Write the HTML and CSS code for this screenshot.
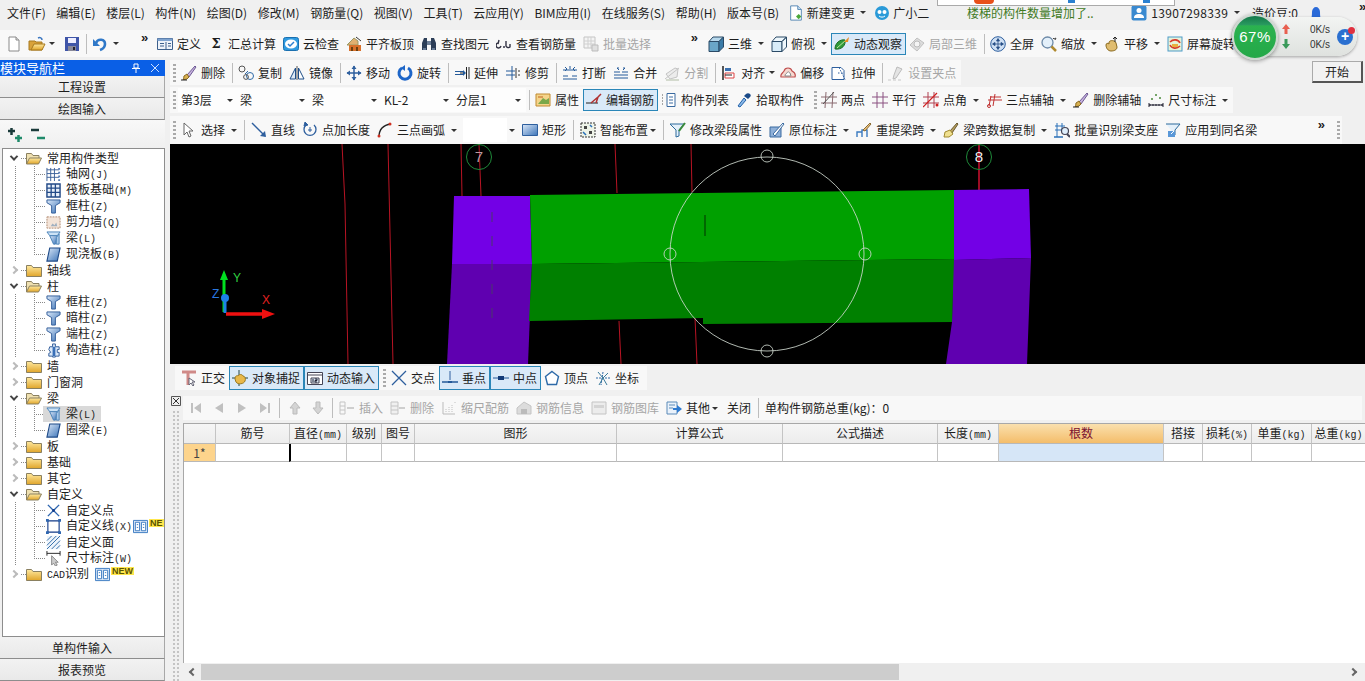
FILE: index.html
```html
<!DOCTYPE html>
<html lang="zh-CN">
<head>
<meta charset="utf-8">
<title>钢筋算量</title>
<link rel="stylesheet" href="styles.css">
</head>
<body>
<svg class="defs" width="0" height="0" aria-hidden="true">
<defs>
<linearGradient id="fy" x1="0" y1="0" x2="0" y2="1"><stop offset="0" stop-color="#ffe9a0"/><stop offset="1" stop-color="#e0a52a"/></linearGradient>
<linearGradient id="bl" x1="0" y1="0" x2="1" y2="1"><stop offset="0" stop-color="#dbe8f8"/><stop offset="1" stop-color="#3c74b8"/></linearGradient>
<symbol id="new" viewBox="0 0 16 16"><path d="M3 1h7l3 3v11H3z" fill="#fff" stroke="#8a8a8a"/><path d="M10 1v3h3" fill="#ddd" stroke="#8a8a8a"/></symbol>
<symbol id="open" viewBox="0 0 18 16"><path d="M1 5h6l1 1h6v8H1z" fill="#d9a23a" stroke="#a87a20"/><path d="M3 14l3-6h11l-3 6z" fill="url(#fy)" stroke="#a87a20"/><path d="M10 2c2-1 4 0 4 2" fill="none" stroke="#3a76c0" stroke-width="1.5"/></symbol>
<symbol id="save" viewBox="0 0 16 16"><path d="M1 1h14v14H1z" fill="#3f55a8"/><path d="M4 2h8v5H4z" fill="#eef"/><path d="M4 10h8v5H4z" fill="#889"/><path d="M9 11h2v3H9z" fill="#223"/></symbol>
<symbol id="undo" viewBox="0 0 16 16"><path d="M4 7C6 2 13 3 13 8c0 3-2 5-5 6" fill="none" stroke="#2f78c8" stroke-width="2.6"/><path d="M1 3v7h7z" fill="#2f78c8"/></symbol>
<symbol id="def" viewBox="0 0 16 16"><path d="M.5 2.500h15v11H.5z" fill="#eef3fa" stroke="#3c5f8c"/><path d="M.5 2.500h15V5H.5z" fill="#7fa3cf"/><path d="M9 6v7M3 7.500h4M3 10h4M11 7.500h3M11 10h3" stroke="#3c5f8c" fill="none"/></symbol>
<symbol id="cloud" viewBox="0 0 16 16"><rect x=".5" y="1.500" width="15" height="13" rx="2" fill="#2f9ae0" stroke="#1a70b0"/><ellipse cx="8" cy="8" rx="6" ry="4.500" fill="#fff"/><path d="M5 8l2 2 4-4" fill="none" stroke="#2f80d0" stroke-width="1.500"/></symbol>
<symbol id="flat" viewBox="0 0 16 16"><path d="M1 9l7-7 4 3v4z" fill="#e0b070" stroke="#996"/><path d="M3 9h12v6H3z" fill="#d8702a"/><path d="M5 11h2v4H5zM10 11h2v4h-2z" fill="#6a4010"/><path d="M10 1l5 4" stroke="#333"/></symbol>
<symbol id="bino" viewBox="0 0 16 16"><path d="M1 14V7l2-5h3v12zM15 14V7l-2-5h-3v12z" fill="#2c3e58"/><path d="M6 5h4v4H6z" fill="#6f8199"/><path d="M2 13h3M11 13h3" stroke="#9fb5d0"/></symbol>
<symbol id="glass" viewBox="0 0 16 16"><path d="M2 7a2.500 2.500 0 1 0 3 3M3 4L2 8M10 5v5a2.500 2.500 0 0 0 4 1l0-3M7 11h2" fill="none" stroke="#334" stroke-width="1.400"/></symbol>
<symbol id="batch" viewBox="0 0 16 16"><path d="M1 1h11v11H1z" fill="#f4f4f4" stroke="#c4c4c4"/><path d="M1 5h11M1 8h11M5 1v11M8 1v11" stroke="#d0d0d0"/><path d="M9 9h6v6H9z" fill="#e0e0e0" stroke="#bbb"/></symbol>
<symbol id="cube" viewBox="0 0 16 16"><path d="M1 5.500h10v10H1z" fill="#6aa6c8" stroke="#2b4a66"/><path d="M1 5.500L5 1h10.500L11 5.500z" fill="#b7d8ec" stroke="#2b4a66"/><path d="M11 5.500L15.500 1v10L11 15.500z" fill="#3b7ca8" stroke="#2b4a66"/></symbol>
<symbol id="cubeo" viewBox="0 0 16 16"><path d="M1 5.500h10v10H1z" fill="#d8ecf8" stroke="#2b4a66"/><path d="M1 5.500L5 1h10.500L11 5.500zM11 5.500L15.500 1v10L11 15.500z" fill="#eef7fc" stroke="#2b4a66"/></symbol>
<symbol id="orbit" viewBox="0 0 16 16"><path d="M1 13C1 7 6 3 11 4c1 5-3 10-10 9z" fill="#2f9a3a" stroke="#1b6a24"/><path d="M3 12l9-8" stroke="#bfe6a0"/><path d="M10 6l5-5-1 5z" fill="#e88a20"/></symbol>
<symbol id="part" viewBox="0 0 16 16"><path d="M1 9l7-7 7 5-7 8z" fill="#dcdcdc" stroke="#c0c0c0"/><circle cx="8" cy="8" r="3" fill="#f4f4f4" stroke="#bbb"/></symbol>
<symbol id="full" viewBox="0 0 16 16"><circle cx="8" cy="8" r="7.300" fill="#cfe0f4" stroke="#2e5f9e"/><path d="M8 3v10M3 8h10M8 2.500L6.500 5h3zM8 13.500L6.500 11h3zM2.500 8L5 6.500v3zM13.500 8L11 6.500v3z" fill="#274f86" stroke="#274f86" stroke-width=".8"/></symbol>
<symbol id="zoom" viewBox="0 0 16 16"><circle cx="6.500" cy="6.500" r="5.500" fill="#e4f0fa" stroke="#6d8aa8" stroke-width="1.300"/><path d="M10.500 10.500l4.500 4.500" stroke="#b08a30" stroke-width="2.500"/><path d="M12 2l1 1 2-1-1 2" stroke="#444" fill="none"/></symbol>
<symbol id="pan" viewBox="0 0 16 16"><path d="M2 9c0-2 2-2 3-1V6c1-2 6-2 7 1l1 4c0 3-3 4-6 4-3 0-5-3-5-6z" fill="#e0bd70" stroke="#8a6a20"/><path d="M11 1v5M9 3l2-2 2 2" stroke="#222" fill="none"/></symbol>
<symbol id="rotv" viewBox="0 0 16 16"><rect x="1" y="1" width="14" height="14" fill="#e6f2da" stroke="#4d9bc8"/><path d="M3 6c3-3 8-3 10 1M13 10c-3 3-8 3-10-1" fill="none" stroke="#d83a2a" stroke-width="1.600"/><path d="M5 8h6v3H5z" fill="#e8b040"/></symbol>
<symbol id="brush" viewBox="0 0 16 16"><path d="M6 10l8-9 1 1-7 10z" fill="#c7b2de" stroke="#6d5a94"/><path d="M3 11l3-2 2 3-2 2c-1 .6-3 .4-4 .4 1-1 .6-2 1-3.400z" fill="#d8b050" stroke="#8a6a20"/><path d="M0 15h6" stroke="#222"/></symbol>
<symbol id="copy" viewBox="0 0 16 16"><circle cx="4" cy="4" r="3" fill="none" stroke="#555"/><circle cx="12" cy="11" r="3.500" fill="none" stroke="#2e6aa8"/><path d="M7 9l3-3" stroke="#2e6aa8"/><circle cx="8" cy="12" r="2.400" fill="none" stroke="#555"/></symbol>
<symbol id="mirror" viewBox="0 0 16 16"><path d="M8 1v14" stroke="#555"/><path d="M6.500 3v11h-5.500z" fill="#dde9f5" stroke="#1e4e88"/><path d="M9.500 3v11h5.500z" fill="#fff" stroke="#1e4e88"/></symbol>
<symbol id="move" viewBox="0 0 16 16"><path d="M8 1v14M1 8h14" stroke="#2e5f9e" stroke-width="1.500"/><path d="M8 .5L5.500 4h5zM8 15.500L5.500 12h5zM.5 8L4 5.500v5zM15.500 8L12 5.500v5z" fill="#2e5f9e"/></symbol>
<symbol id="rot" viewBox="0 0 16 16"><path d="M5 3a6 6 0 1 0 6 0" fill="none" stroke="#1e66c8" stroke-width="3"/><path d="M8 0L4 3l4 3z" fill="#1e66c8"/></symbol>
<symbol id="ext" viewBox="0 0 16 16"><path d="M1 6.500h8M1 9.500h8" stroke="#245a9a"/><path d="M6 8h4M12.500 2v12M15 2v12" stroke="#222"/><path d="M9 5l3 3-3 3" fill="#245a9a"/></symbol>
<symbol id="trim" viewBox="0 0 16 16"><path d="M1 6h9M1 10h9" stroke="#245a9a"/><path d="M7 1v14" stroke="#245a9a"/><path d="M11 3v10M14 5v2M14 9v2" stroke="#333"/></symbol>
<symbol id="brk" viewBox="0 0 16 16"><path d="M1 5h14M1 11h5M10 11h5" stroke="#245a9a" stroke-width="1.200"/><path d="M1 14h14" stroke="#245a9a"/><path d="M3 2l2 2-2 2M13 2l-2 2 2 2M8 1v3" stroke="#245a9a" fill="none"/></symbol>
<symbol id="merge" viewBox="0 0 16 16"><path d="M1 13h14M1 7h6M9 7h6M1 10h14" stroke="#245a9a"/><path d="M4 3l2 2M12 3l-2 2M4 3h2M12 3h-2" stroke="#245a9a" fill="none"/></symbol>
<symbol id="split" viewBox="0 0 16 16"><path d="M1 14l14-11M2 9l9-6 3 1-1 8-7 2z" fill="#ececec" stroke="#c4c4c4"/><path d="M2 15h13" stroke="#c8d0c0" stroke-width="1.500"/></symbol>
<symbol id="alignv" viewBox="0 0 16 16"><path d="M2 1v14" stroke="#222" stroke-width="1.500"/><path d="M4 3h6v3H4z" fill="#3a70b0"/><path d="M4 8h9v5H4z" fill="#fff" stroke="#d44"/><path d="M4 10h7" stroke="#222"/></symbol>
<symbol id="offs" viewBox="0 0 16 16"><path d="M1 12c-1-3 2-4 3-6 1-4 7-4 8 0 2 1 4 3 3 6z" fill="#f6d8d0" stroke="#c05050" stroke-width="1.200"/><path d="M5 11c0-2 1-2 2-3 1-2 2-1 3 0l1 3z" fill="#fff" stroke="#888"/></symbol>
<symbol id="stretch" viewBox="0 0 16 16"><path d="M1 2.500h9l3 3v9H1z" fill="#fff" stroke="#2e5f9e"/><path d="M8 2.500l6 12M7 8h5" stroke="#2e5f9e" stroke-dasharray="1.500 1.500"/></symbol>
<symbol id="grips" viewBox="0 0 16 16"><path d="M9 2l5 2-6 9-3 1 1-4z" fill="#e4e4e4" stroke="#bbb"/><path d="M0 15h3M5 15h3M10 15h3" stroke="#c8c8c8"/></symbol>
<symbol id="prop" viewBox="0 0 16 16"><path d="M1 2h14v12H1z" fill="#f4d48a" stroke="#c08a30"/><path d="M3 12l5-6 3 2 3-2v6z" fill="#7aa84a"/><path d="M3 5h5" stroke="#c06020"/></symbol>
<symbol id="edit" viewBox="0 0 16 16"><path d="M0 11h12" stroke="#222"/><path d="M5 11l7-6-2 6M12 5l3-3" stroke="#b03030" fill="none" stroke-width="1.500"/></symbol>
<symbol id="list" viewBox="0 0 16 16"><path d="M1 3h2M1 6h2M1 9h2M1 12h2" stroke="#555" stroke-dasharray="1 1"/><path d="M6 1.500h8v13H6z" fill="#fff" stroke="#3a6aa0"/><path d="M8 5h4M8 8h4M8 11h4" stroke="#3a6aa0"/></symbol>
<symbol id="pick" viewBox="0 0 16 16"><path d="M2 14l6-8 2 2-6 7z" fill="#8ab8e8" stroke="#2060a8"/><path d="M8 4l2-2c1-1 3-1 4 0s1 2 0 3l-2 2z" fill="#1a4a88"/></symbol>
<symbol id="two" viewBox="0 0 16 16"><path d="M0 5h16M0 11h16M5 0l-1 16M12 0l-1 16" stroke="#8a6a70"/><path d="M13 0L2 12" stroke="#555"/></symbol>
<symbol id="para" viewBox="0 0 16 16"><path d="M0 5h16M0 11h16M5 0v16M11 0v16" stroke="#8a5080"/></symbol>
<symbol id="angl" viewBox="0 0 16 16"><path d="M0 5h16M0 11h16M5 0v16M11 0v16" stroke="#b04050"/><path d="M0 15L14 1" stroke="#d02020" stroke-width="1.200"/><circle cx="14" cy="13" r="1.500" fill="#d02020"/></symbol>
<symbol id="three" viewBox="0 0 16 16"><path d="M3 14L5 4M2 8h14M9 2L7 14M4 5h11" stroke="#c03030" fill="none"/><circle cx="3" cy="14" r="1.500" fill="none" stroke="#c03030"/></symbol>
<symbol id="dim" viewBox="0 0 16 16"><path d="M1 11v4M15 11v4M1 13h14" stroke="#223"/><path d="M1 13h14" stroke="#223" stroke-dasharray="2 1"/><circle cx="8" cy="3" r="1" fill="#4a8a3a"/><circle cx="12" cy="6" r="1" fill="#4a8a3a"/><circle cx="4" cy="7" r="1" fill="#4a8a3a"/></symbol>
<symbol id="cursor" viewBox="0 0 16 16"><path d="M3 1v12l3-3 2 5 2-1-2-5h4z" fill="#fff" stroke="#666"/></symbol>
<symbol id="line" viewBox="0 0 16 16"><path d="M1 1l13 13" stroke="#2e5f9e" stroke-width="1.400"/><path d="M15 15l-6-1 5-5z" fill="#2e5f9e"/></symbol>
<symbol id="ptlen" viewBox="0 0 16 16"><path d="M4 3a6 6 0 1 0 8 0" fill="none" stroke="#2e5f9e" stroke-width="1.300"/><path d="M3 0l3 3-4 1zM8 5v5M6 8h4" stroke="#2e5f9e" fill="#2e5f9e"/></symbol>
<symbol id="arc" viewBox="0 0 16 16"><path d="M2 15C2 8 6 3 14 2" fill="none" stroke="#222" stroke-width="1.300"/><circle cx="2" cy="14" r="1.500" fill="#d03020"/><circle cx="13" cy="2" r="1.500" fill="#d03020"/></symbol>
<symbol id="rect" viewBox="0 0 16 16"><path d="M.5 2.500h15v11H.5z" fill="url(#bl)" stroke="#2e5f9e"/></symbol>
<symbol id="smart" viewBox="0 0 16 16"><path d="M1 1h14v14H1z" fill="#eef3e8" stroke="#333" stroke-dasharray="2 1"/><path d="M4 4h3v3H4zM9 9h3v3H9z" fill="#444"/><path d="M10 3l2 2M3 10l3 3" stroke="#2a70b8" stroke-width="1.500"/></symbol>
<symbol id="mod" viewBox="0 0 16 16"><path d="M0 2h14L9 8v6l-3 1V8z" fill="#e4f0fa" stroke="#2c6a9c"/><path d="M9 9l6-8" stroke="#3a8a3a" stroke-width="2"/></symbol>
<symbol id="ann" viewBox="0 0 16 16"><path d="M1 5h11v10H1z" fill="#8fb0d8" stroke="#3a6aa0"/><path d="M4 12L14 1l1 1L6 14z" fill="#fff" stroke="#3a6aa0"/></symbol>
<symbol id="lift" viewBox="0 0 16 16"><path d="M1 15v-5h5v5M6 15v-7h5v7" fill="none" stroke="#3a7ac0" stroke-width="1.400"/><path d="M7 8l7-7 1 1-6 7z" fill="#e8c080" stroke="#8a6a30"/></symbol>
<symbol id="bcopy" viewBox="0 0 16 16"><path d="M7 9l7-8 1 1-6 9z" fill="#b8a060" stroke="#6a5a30"/><path d="M2 10l5-2 3 4-4 3H1z" fill="#f0e090" stroke="#a08a30"/></symbol>
<symbol id="bid" viewBox="0 0 16 16"><path d="M1 4h10M1 8h8M3 1v14M8 1v8" stroke="#2a70b8"/><circle cx="11" cy="9" r="3.500" fill="#dfeefb" stroke="#445" stroke-width="1.200"/><path d="M13 12l3 3" stroke="#445" stroke-width="2"/><path d="M0 15h9" stroke="#2a70b8" stroke-width="1.500"/></symbol>
<symbol id="apply" viewBox="0 0 16 16"><path d="M1 2h14L10 8v5" fill="#e4f0fa" stroke="#2c6a9c"/><path d="M3 9h7v6H3z" fill="#5a98d8"/><path d="M6 12l3-3" stroke="#fff"/></symbol>
<symbol id="ortho" viewBox="0 0 16 16"><path d="M1 2h6v13M1 2h14" stroke="#d08a88" stroke-width="3" fill="none"/><path d="M8 8v7l2-2 2 3 1-1-2-3h3z" fill="#fff" stroke="#667"/></symbol>
<symbol id="osnap" viewBox="0 0 16 16"><path d="M7 0v16M0 8h16" stroke="#244"/><path d="M3 9c0-3 2-4 3-3 1-2 4-2 5 0 2 0 3 3 2 5-1 3-7 4-9 1z" fill="#e8b84a" stroke="#9a7a20"/></symbol>
<symbol id="dyn" viewBox="0 0 16 16"><path d="M.5 2.500h15v12H.5z" fill="#fff" stroke="#445"/><path d="M.5 5h15" stroke="#445"/><path d="M4 8h8v5H4z" fill="#d9e6f2" stroke="#445"/><path d="M6 9v3M8 9h2v1.500H8V12h2" stroke="#223" fill="none"/></symbol>
<symbol id="cross" viewBox="0 0 16 16"><path d="M1 1l14 14M15 1L1 15" stroke="#2e5f9e" stroke-width="1.300"/></symbol>
<symbol id="perp" viewBox="0 0 16 16"><path d="M0 12h16" stroke="#245a9a" stroke-width="1.500"/><path d="M8 1v9" stroke="#2e5f9e"/><path d="M6 11h4v2H6z" fill="#245a9a"/></symbol>
<symbol id="mid" viewBox="0 0 16 16"><path d="M0 8h16" stroke="#245a9a"/><path d="M5 6h6v4H5z" fill="#123a78"/></symbol>
<symbol id="vert" viewBox="0 0 16 16"><path d="M8 1.500l6.500 5-2 8h-9l-2-8z" fill="#fff" stroke="#2e6aa8" stroke-width="1.400"/></symbol>
<symbol id="coord" viewBox="0 0 16 16"><path d="M1 8h14M8 2l-2 13" stroke="#2e6aa8" stroke-dasharray="2 1"/><path d="M3 2l5 6-4 7M13 3L8 8l4 7" stroke="#3a7a9a" fill="none"/></symbol>
<symbol id="first" viewBox="0 0 16 16"><path d="M3 3h2v10H3zM13 3v10L6 8z" fill="#c0c0c0"/></symbol>
<symbol id="prev" viewBox="0 0 16 16"><path d="M12 3v10L4 8z" fill="#c0c0c0"/></symbol>
<symbol id="next" viewBox="0 0 16 16"><path d="M4 3v10l8-5z" fill="#c0c0c0"/></symbol>
<symbol id="last" viewBox="0 0 16 16"><path d="M13 3h-2v10h2zM3 3v10l7-5z" fill="#c0c0c0"/></symbol>
<symbol id="up" viewBox="0 0 16 16"><path d="M8 2L3 8h3v6h4V8h3z" fill="#d4d4d4" stroke="#bbb"/></symbol>
<symbol id="down" viewBox="0 0 16 16"><path d="M8 14L3 8h3V2h4v6h3z" fill="#d4d4d4" stroke="#bbb"/></symbol>
<symbol id="ins" viewBox="0 0 16 16"><path d="M1 2h5v12H1zM1 6h5M1 10h5" fill="none" stroke="#c4c4c4"/><path d="M8 8h7" stroke="#c0c0c0" stroke-width="1.500"/></symbol>
<symbol id="delr" viewBox="0 0 16 16"><path d="M1 2h7v12H1zM1 6h7M1 10h7" fill="#f0f0f0" stroke="#c4c4c4"/><path d="M9 8h6" stroke="#c0c0c0" stroke-width="1.500"/></symbol>
<symbol id="scale" viewBox="0 0 16 16"><path d="M2 2v12h12" fill="none" stroke="#bbb"/><path d="M5 12V8M8 12V6M11 12V4M14 2v2" stroke="#c0c0c0" stroke-dasharray="1 1"/></symbol>
<symbol id="info" viewBox="0 0 16 16"><path d="M1 8l7-6 7 4v8H1z" fill="#dcdcdc" stroke="#c4c4c4"/><path d="M5 14V9h6v5" fill="#bbb"/></symbol>
<symbol id="lib" viewBox="0 0 16 16"><path d="M1 2h14v12H1z" fill="#ececec" stroke="#c4c4c4"/><path d="M3 5h10v3H3z" fill="#d4d4d4"/></symbol>
<symbol id="other" viewBox="0 0 16 16"><path d="M1 2h10v12H1z" fill="#eaf2fb" stroke="#5a8ab8"/><path d="M3 5h6M3 8h4" stroke="#5a8ab8"/><path d="M7 8h4V5l5 4-5 4v-3H7z" fill="#2e7ad0"/></symbol>
<symbol id="fold" viewBox="0 0 16 16"><path d="M.5 3.500h5l1.500 2h8.500v9H.5z" fill="url(#fy)" stroke="#8a8060"/></symbol>
<symbol id="folo" viewBox="0 0 16 16"><path d="M.5 14V3.500h5l1.500 2h6v3" fill="#efe0b0" stroke="#8a8060"/><path d="M.5 14l3-6h12l-3 6z" fill="url(#fy)" stroke="#8a8060"/></symbol>
<symbol id="gridn" viewBox="0 0 16 16"><path d="M1 1v14M5 1v14M9 1v14M1 3h13M1 7h13M1 11h13" stroke="#3a5f98"/><path d="M13 1h2v2h-2zM13 5h2v2h-2zM13 9h2v2h-2zM13 13h2v2h-2z" fill="#5a7fb8"/></symbol>
<symbol id="raft" viewBox="0 0 16 16"><path d="M1 1h14v14H1z" fill="#e8f0fa" stroke="#224a88" stroke-width="1.500"/><path d="M1 5.500h14M1 10h14M5.500 1v14M10 1v14" stroke="#224a88" stroke-width="1.400"/></symbol>
<symbol id="col" viewBox="0 0 16 16"><path d="M1 1h14v3L10 7v8H6V7L1 4z" fill="url(#bl)" stroke="#2e5a98"/></symbol>
<symbol id="wall" viewBox="0 0 16 16"><path d="M1 2h14v12H1z" fill="#f4e4d8" stroke="#b08a70" stroke-dasharray="2 1"/><path d="M5 12l2-3 2 2 2-3 1 4z" fill="#a0b0c0"/></symbol>
<symbol id="beam" viewBox="0 0 16 16"><path d="M1 1h14l-3 4H4z" fill="#cde3f6" stroke="#4a82b8"/><path d="M4 5l4 9h2l2-9z" fill="url(#bl)" stroke="#4a82b8"/><path d="M11 7l3-4v11h-3z" fill="#a8c8e8" stroke="#4a82b8"/></symbol>
<symbol id="slab" viewBox="0 0 16 16"><path d="M4 1h11l-3 14H1z" fill="url(#bl)" stroke="#1e4a88" stroke-width="1.200"/></symbol>
<symbol id="gcol" viewBox="0 0 16 16"><path d="M4 4h3V1h3v3h4v3h-2v3h2v4h-4v1H7v-1H3v-3l2-1-2-3z" fill="#dbe8f8" stroke="#2e5a98"/><path d="M7 4h3v10H7z" fill="#3a70b8"/></symbol>
<symbol id="xpt" viewBox="0 0 16 16"><path d="M2 2l12 12M14 2L2 14" stroke="#2e66b0" stroke-width="1.500"/><circle cx="8" cy="8" r="1.500" fill="#123a88"/></symbol>
<symbol id="xline" viewBox="0 0 16 16"><path d="M2 2h12v12H2z" fill="#fff" stroke="#123a88" stroke-width="1.200"/><path d="M0 0h3v3H0zM13 0h3v3h-3zM0 13h3v3H0zM13 13h3v3h-3z" fill="#2e66b0"/></symbol>
<symbol id="xface" viewBox="0 0 16 16"><path d="M1 1h14v14H1z" fill="#eef4fb"/><path d="M1 6l5-5M1 11L11 1M1 15L15 1M6 15l9-9M11 15l4-4" stroke="#2e6aa8"/></symbol>
<symbol id="xdim" viewBox="0 0 16 16"><path d="M1 0v5M15 0v5M1 2.500h14" stroke="#222"/><path d="M6 5v10l2-2 2 3 2-1-2-3h3z" fill="#ccc" stroke="#888"/></symbol>
<symbol id="book" viewBox="0 0 16 16"><path d="M.5 1.500h15v13H.5z" fill="#dbe8f8" stroke="#3a7ac0"/><path d="M2.500 3.500h4.500v9H2.500zM9 3.500h4.500v9H9z" fill="#fff" stroke="#3a7ac0"/><path d="M4 6h1.500M4 9h1.500M10.500 6H12M10.500 9H12" stroke="#3a7ac0"/></symbol>
<symbol id="docg" viewBox="0 0 16 18"><path d="M2 1h8l4 4v12H2z" fill="#fff" stroke="#4a80b0"/><path d="M10 1v4h4" fill="#cfe3f5" stroke="#4a80b0"/><path d="M8 13l3-3 3 3-3 3z" fill="#4aa83a"/></symbol>
<symbol id="face" viewBox="0 0 16 16"><circle cx="8" cy="8" r="7" fill="#2a9ad8"/><circle cx="5.500" cy="7" r="2" fill="#fff"/><circle cx="10.500" cy="7" r="2" fill="#fff"/><path d="M5 11c2 1.500 4 1.500 6 0" stroke="#fff" fill="none"/></symbol>
<symbol id="user" viewBox="0 0 16 16"><rect x=".5" y=".5" width="15" height="15" rx="2" fill="#3a8ad0"/><circle cx="8" cy="5.500" r="2.500" fill="#fff"/><path d="M3 13c0-3 2-4 5-4s5 1 5 4z" fill="#fff"/></symbol>
<symbol id="bell" viewBox="0 0 16 16"><path d="M2 15c1-1 2-2 2-8 0-3 2-5 4-5s4 2 4 5c0 6 1 7 2 8z" fill="#2a6ad8"/></symbol>
<symbol id="minusp" viewBox="0 0 16 16"><path d="M1 3h8" stroke="#1a3a3a" stroke-width="2.500"/><path d="M7 11h8" stroke="#1f8a6a" stroke-width="2.500"/></symbol>
<symbol id="pluss" viewBox="0 0 16 16"><path d="M1 4h7M4.500 1v7" stroke="#1a3a3a" stroke-width="2.500"/><path d="M8 11h7M11.500 8v7" stroke="#1f8a6a" stroke-width="2.500"/></symbol>
</defs>
</svg>

<div class="app">
  <header class="menubar">
    <span class="mi">文件(F)</span><span class="mi">编辑(E)</span><span class="mi">楼层(L)</span><span class="mi">构件(N)</span><span class="mi">绘图(D)</span><span class="mi">修改(M)</span><span class="mi">钢筋量(Q)</span><span class="mi">视图(V)</span><span class="mi">工具(T)</span><span class="mi">云应用(Y)</span><span class="mi">BIM应用(I)</span><span class="mi">在线服务(S)</span><span class="mi">帮助(H)</span><span class="mi">版本号(B)</span>
    <span class="mi mi-doc"><svg class="i"><use href="#docg"/></svg>新建变更<i class="arr"></i></span>
    <span class="mi mi-xiao"><svg class="i"><use href="#face"/></svg>广小二</span>
    <span class="notice">楼梯的构件数量增加了..</span>
    <span class="mi mi-user"><svg class="i"><use href="#user"/></svg><span class="phone">13907298339</span><i class="arr"></i></span>
    <span class="mi mi-bean">造价豆:0</span>
    <svg class="i bell"><use href="#bell"/></svg>
    <span class="more more-top">»</span>
  </header>

  <div class="tb-top">
    <div class="seg seg-a">
      <span class="it ic"><svg class="i"><use href="#new"/></svg></span>
      <span class="it ic"><svg class="i i18"><use href="#open"/></svg></span><i class="arr arr-n"></i>
      <span class="it ic"><svg class="i"><use href="#save"/></svg></span><i class="sep"></i>
      <span class="it ic"><svg class="i"><use href="#undo"/></svg></span><i class="arr"></i>
      <span class="more">»</span>
    </div>
    <div class="seg seg-b">
      <span class="it"><svg class="i"><use href="#def"/></svg>定义</span>
      <span class="it"><b class="sigma">Σ</b>汇总计算</span>
      <span class="it"><svg class="i"><use href="#cloud"/></svg>云检查</span>
      <span class="it"><svg class="i"><use href="#flat"/></svg>平齐板顶</span>
      <span class="it"><svg class="i"><use href="#bino"/></svg>查找图元</span>
      <span class="it"><svg class="i"><use href="#glass"/></svg>查看钢筋量</span>
      <span class="it off"><svg class="i"><use href="#batch"/></svg>批量选择</span>
      <span class="more">»</span>
    </div>
    <div class="seg seg-c">
      <span class="it"><svg class="i"><use href="#cube"/></svg>三维</span><i class="arr"></i>
      <span class="it"><svg class="i"><use href="#cubeo"/></svg>俯视</span><i class="arr"></i>
      <span class="it on"><svg class="i"><use href="#orbit"/></svg>动态观察</span>
      <span class="it off"><svg class="i"><use href="#part"/></svg>局部三维</span><i class="sep"></i>
      <span class="it"><svg class="i"><use href="#full"/></svg>全屏</span>
      <span class="it"><svg class="i"><use href="#zoom"/></svg>缩放</span><i class="arr"></i>
      <span class="it"><svg class="i"><use href="#pan"/></svg>平移</span><i class="arr"></i>
      <span class="it"><svg class="i"><use href="#rotv"/></svg>屏幕旋转</span>
    </div>
  </div>

  <div class="work">
    <aside class="nav">
      <div class="nav-title"><span>模块导航栏</span><span class="nav-pin">
        <svg class="i i10" viewBox="0 0 10 10"><path d="M3 1h4v4H3zM1 5.500h8M5 6v4" stroke="#fff" fill="none"/></svg>
        <svg class="i i10" viewBox="0 0 10 10"><path d="M1 1l8 8M9 1L1 9" stroke="#cfe0ff" fill="none"/></svg></span></div>
      <div class="nav-btn">工程设置</div>
      <div class="nav-btn">绘图输入</div>
      <div class="tree-tools"><svg class="i"><use href="#pluss"/></svg><svg class="i"><use href="#minusp"/></svg></div>
      <div class="tree">
        <div class="row"><i class="chev op"></i><svg class="fd"><use href="#folo"/></svg>常用构件类型</div>
        <div class="kid"><svg class="ki"><use href="#gridn"/></svg><span>轴网<span class="m">(J)</span></span></div>
        <div class="kid"><svg class="ki"><use href="#raft"/></svg><span>筏板基础<span class="m">(M)</span></span></div>
        <div class="kid"><svg class="ki"><use href="#col"/></svg><span>框柱<span class="m">(Z)</span></span></div>
        <div class="kid"><svg class="ki"><use href="#wall"/></svg><span>剪力墙<span class="m">(Q)</span></span></div>
        <div class="kid"><svg class="ki"><use href="#beam"/></svg><span>梁<span class="m">(L)</span></span></div>
        <div class="kid end"><svg class="ki"><use href="#slab"/></svg><span>现浇板<span class="m">(B)</span></span></div>
        <div class="row"><i class="chev"></i><svg class="fd"><use href="#fold"/></svg>轴线</div>
        <div class="row"><i class="chev op"></i><svg class="fd"><use href="#folo"/></svg>柱</div>
        <div class="kid"><svg class="ki"><use href="#col"/></svg><span>框柱<span class="m">(Z)</span></span></div>
        <div class="kid"><svg class="ki"><use href="#col"/></svg><span>暗柱<span class="m">(Z)</span></span></div>
        <div class="kid"><svg class="ki"><use href="#col"/></svg><span>端柱<span class="m">(Z)</span></span></div>
        <div class="kid end"><svg class="ki"><use href="#gcol"/></svg><span>构造柱<span class="m">(Z)</span></span></div>
        <div class="row"><i class="chev"></i><svg class="fd"><use href="#fold"/></svg>墙</div>
        <div class="row"><i class="chev"></i><svg class="fd"><use href="#fold"/></svg>门窗洞</div>
        <div class="row"><i class="chev op"></i><svg class="fd"><use href="#folo"/></svg>梁</div>
        <div class="kid sel"><svg class="ki"><use href="#beam"/></svg><span>梁<span class="m">(L)</span></span></div>
        <div class="kid end"><svg class="ki"><use href="#slab"/></svg><span>圈梁<span class="m">(E)</span></span></div>
        <div class="row"><i class="chev"></i><svg class="fd"><use href="#fold"/></svg>板</div>
        <div class="row"><i class="chev"></i><svg class="fd"><use href="#fold"/></svg>基础</div>
        <div class="row"><i class="chev"></i><svg class="fd"><use href="#fold"/></svg>其它</div>
        <div class="row"><i class="chev op"></i><svg class="fd"><use href="#folo"/></svg>自定义</div>
        <div class="kid"><svg class="ki"><use href="#xpt"/></svg><span>自定义点</span></div>
        <div class="kid"><svg class="ki"><use href="#xline"/></svg><span>自定义线<span class="m">(X)</span></span><svg class="bk"><use href="#book"/></svg><span class="new">NE</span></div>
        <div class="kid"><svg class="ki"><use href="#xface"/></svg><span>自定义面</span></div>
        <div class="kid end"><svg class="ki"><use href="#xdim"/></svg><span>尺寸标注<span class="m">(W)</span></span></div>
        <div class="row"><i class="chev"></i><svg class="fd"><use href="#fold"/></svg><span><span class="m">CAD</span>识别</span><svg class="bk bk-cad"><use href="#book"/></svg><span class="new">NEW</span></div>
      </div>
      <div class="nav-btn">单构件输入</div>
      <div class="nav-btn">报表预览</div>
    </aside>

    <main class="main">
      <div class="tb t1">
        <i class="grip"></i>
        <span class="it"><svg class="i"><use href="#brush"/></svg>删除</span><i class="sep"></i>
        <span class="it"><svg class="i"><use href="#copy"/></svg>复制</span>
        <span class="it"><svg class="i"><use href="#mirror"/></svg>镜像</span><i class="sep"></i>
        <span class="it"><svg class="i"><use href="#move"/></svg>移动</span>
        <span class="it"><svg class="i"><use href="#rot"/></svg>旋转</span><i class="sep"></i>
        <span class="it"><svg class="i"><use href="#ext"/></svg>延伸</span>
        <span class="it"><svg class="i"><use href="#trim"/></svg>修剪</span><i class="sep"></i>
        <span class="it"><svg class="i"><use href="#brk"/></svg>打断</span>
        <span class="it"><svg class="i"><use href="#merge"/></svg>合并</span>
        <span class="it off"><svg class="i"><use href="#split"/></svg>分割</span><i class="sep"></i>
        <span class="it"><svg class="i"><use href="#alignv"/></svg>对齐</span><i class="arr arr-t"></i>
        <span class="it"><svg class="i"><use href="#offs"/></svg>偏移</span>
        <span class="it"><svg class="i"><use href="#stretch"/></svg>拉伸</span><i class="sep"></i>
        <span class="it off"><svg class="i"><use href="#grips"/></svg>设置夹点</span>
      </div>
      <div class="tb t2">
        <i class="grip"></i>
        <span class="combo c1"><span>第3层</span><i class="arr"></i></span>
        <span class="combo"><span>梁</span><i class="arr"></i></span>
        <span class="combo"><span>梁</span><i class="arr"></i></span>
        <span class="combo"><span>KL-2</span><i class="arr"></i></span>
        <span class="combo"><span>分层1</span><i class="arr"></i></span><i class="sep"></i>
        <span class="it"><svg class="i"><use href="#prop"/></svg>属性</span>
        <span class="it on"><svg class="i"><use href="#edit"/></svg>编辑钢筋</span>
        <span class="it"><svg class="i"><use href="#list"/></svg>构件列表</span>
        <span class="it"><svg class="i"><use href="#pick"/></svg>拾取构件</span>
        <i class="grip grip-mid"></i>
        <span class="it"><svg class="i"><use href="#two"/></svg>两点</span>
        <span class="it"><svg class="i"><use href="#para"/></svg>平行</span>
        <span class="it"><svg class="i"><use href="#angl"/></svg>点角</span><i class="arr"></i>
        <span class="it"><svg class="i"><use href="#three"/></svg>三点辅轴</span><i class="arr"></i>
        <span class="it"><svg class="i"><use href="#brush"/></svg>删除辅轴</span>
        <span class="it"><svg class="i"><use href="#dim"/></svg>尺寸标注</span><i class="arr"></i>
      </div>
      <div class="tb t3">
        <i class="grip"></i>
        <span class="it"><svg class="i"><use href="#cursor"/></svg>选择</span><i class="arr"></i><i class="sep"></i>
        <span class="it"><svg class="i"><use href="#line"/></svg>直线</span>
        <span class="it"><svg class="i"><use href="#ptlen"/></svg>点加长度</span>
        <span class="it"><svg class="i"><use href="#arc"/></svg>三点画弧</span><i class="arr"></i>
        <span class="blank"></span><i class="arr"></i>
        <span class="it"><svg class="i"><use href="#rect"/></svg>矩形</span><i class="sep"></i>
        <span class="it"><svg class="i"><use href="#smart"/></svg>智能布置<i class="arr arr-in"></i></span><i class="sep"></i>
        <span class="it"><svg class="i"><use href="#mod"/></svg>修改梁段属性</span>
        <span class="it"><svg class="i"><use href="#ann"/></svg>原位标注</span><i class="arr"></i>
        <span class="it"><svg class="i"><use href="#lift"/></svg>重提梁跨</span><i class="arr"></i>
        <span class="it"><svg class="i"><use href="#bcopy"/></svg>梁跨数据复制</span><i class="arr"></i>
        <span class="it"><svg class="i"><use href="#bid"/></svg>批量识别梁支座</span>
        <span class="it"><svg class="i"><use href="#apply"/></svg>应用到同名梁</span>
        <span class="more more-t3">»</span>
        <i class="grip grip-end"></i>
      </div>

      <svg class="canvas" viewBox="170 144 1195 220" role="img" aria-label="三维梁视图">
        <g class="gridline">
          <path d="M342 144L345 204L348 364"/><path d="M388 144L393 364"/><path d="M461 144L462 196"/>
          <path d="M479 144L481 196"/><path d="M615 144L617 193"/><path d="M619 321L621 364"/>
          <path d="M691 144L692 192"/><path d="M695 318L697 364"/>
        </g>
        <path class="gridline-b" d="M979 144V190"/>
        <polygon fill="#5f00b0" points="452,264 532,264 528,364 447,364"/>
        <polygon fill="#7300e6" points="454,196 530,196 532,264 452,264"/>
        <polygon fill="#5f00b0" points="953,260 1031,258 1027,364 946,364 952,322"/>
        <polygon fill="#7300e6" points="953,190 1029,189 1031,258 954,260"/>
        <polygon fill="#00a000" points="530,195 954,190 954,259 532,264"/>
        <polygon fill="#008000" points="532,264 954,259 952,322 703,324 703,318 529,321"/>
        <path class="dash" d="M492 212V320"/>
        <path class="dash2" d="M705 215V236"/>
        <g class="orb">
          <circle cx="767" cy="254" r="97"/>
          <circle cx="767" cy="156" r="6"/><circle cx="767" cy="351" r="6"/>
          <circle cx="670" cy="254" r="6"/><circle cx="865" cy="254" r="6"/>
        </g>
        <g class="bubble">
          <circle cx="479" cy="157" r="12.500"/><circle cx="979" cy="157" r="12.500"/>
        </g>
        <text class="bt7" x="479" y="162" text-anchor="middle">7</text>
        <text class="bt8" x="979" y="162" text-anchor="middle">8</text>
        <path d="M224 312V280" stroke="#00e020" stroke-width="3"/><path d="M224 270l-4 10h8z" fill="#00e020"/>
        <path d="M225 313V300" stroke="#1e80e8" stroke-width="3"/><circle cx="225" cy="298" r="4" fill="#1e80e8"/>
        <path d="M226 314H264" stroke="#f01010" stroke-width="3.500"/><path d="M262 309l13 5-13 5z" fill="#f01010"/>
        <text class="ax ax-y" x="233" y="282">Y</text>
        <text class="ax ax-z" x="212" y="298">Z</text>
        <text class="ax ax-x" x="262" y="304">X</text>
      </svg>

      <div class="snap">
        <div class="snap-in">
          <span class="it"><svg class="i"><use href="#ortho"/></svg>正交</span>
          <span class="it on"><svg class="i"><use href="#osnap"/></svg>对象捕捉</span>
          <span class="it on"><svg class="i"><use href="#dyn"/></svg>动态输入</span>
          <i class="grip grip-mid2"></i>
          <span class="it"><svg class="i"><use href="#cross"/></svg>交点</span>
          <span class="it on"><svg class="i"><use href="#perp"/></svg>垂点</span>
          <span class="it on"><svg class="i"><use href="#mid"/></svg>中点</span>
          <span class="it"><svg class="i"><use href="#vert"/></svg>顶点</span>
          <span class="it"><svg class="i"><use href="#coord"/></svg>坐标</span>
        </div>
      </div>

      <div class="steel">
        <div class="steel-side">
          <svg class="i i10" viewBox="0 0 10 10"><path d="M.5.500h9v9h-9z" fill="#eee" stroke="#555"/><path d="M2 2l6 6M8 2L2 8" stroke="#333"/></svg>
          <i class="dots"></i>
        </div>
        <div class="steel-body">
          <div class="tb t4">
            <span class="it ic"><svg class="i"><use href="#first"/></svg></span>
            <span class="it ic"><svg class="i"><use href="#prev"/></svg></span>
            <span class="it ic"><svg class="i"><use href="#next"/></svg></span>
            <span class="it ic"><svg class="i"><use href="#last"/></svg></span><i class="sep"></i>
            <span class="it ic"><svg class="i"><use href="#up"/></svg></span>
            <span class="it ic"><svg class="i"><use href="#down"/></svg></span><i class="sep"></i>
            <span class="it off"><svg class="i"><use href="#ins"/></svg>插入</span>
            <span class="it off"><svg class="i"><use href="#delr"/></svg>删除</span>
            <span class="it off"><svg class="i"><use href="#scale"/></svg>缩尺配筋</span>
            <span class="it off"><svg class="i"><use href="#info"/></svg>钢筋信息</span>
            <span class="it off"><svg class="i"><use href="#lib"/></svg>钢筋图库</span>
            <span class="it"><svg class="i"><use href="#other"/></svg>其他<i class="arr arr-in"></i></span>
            <span class="it it-close">关闭</span><i class="sep"></i>
            <span class="it">单构件钢筋总重(kg)：0</span>
          </div>
          <div class="sheet">
            <div class="th"></div><div class="th">筋号</div><div class="th">直径<span class="m">(mm)</span></div><div class="th">级别</div><div class="th">图号</div><div class="th">图形</div><div class="th">计算公式</div><div class="th">公式描述</div><div class="th">长度<span class="m">(mm)</span></div><div class="th th-on">根数</div><div class="th">搭接</div><div class="th">损耗<span class="m">(%)</span></div><div class="th">单重<span class="m">(kg)</span></div><div class="th">总重<span class="m">(kg)</span></div>
            <div class="td td-n">1*</div><div class="td"></div><div class="td td-cur"></div><div class="td"></div><div class="td"></div><div class="td"></div><div class="td"></div><div class="td"></div><div class="td"></div><div class="td td-on"></div><div class="td"></div><div class="td"></div><div class="td"></div><div class="td"></div>
          </div>
          <div class="hbar"><i class="sb-l"></i><span class="thumb"></span><i class="sb-r"></i></div>
        </div>
      </div>
    </main>
  </div>

  <div class="peek"><span class="peek-o"></span><span class="peek-b1"></span><span class="peek-b2"></span></div>
  <button class="start">开始</button>
  <div class="widget">
    <div class="gauge">67%</div>
    <div class="updn">
      <svg class="i i10" viewBox="0 0 10 10"><path d="M5 0L1 5h2.500v5h3V5H9z" fill="#e86050"/></svg>
      <svg class="i i10" viewBox="0 0 10 10"><path d="M5 10L1 5h2.500V0h3v5H9z" fill="#3a9a5a"/></svg>
    </div>
    <div class="rates"><span>0K/s</span><span>0K/s</span></div>
    <div class="plus">+</div>
  </div>
</div>
</body>
</html>
```
FILE: styles.css
```css
* { box-sizing: border-box; }
html, body { margin: 0; height: 100%; }
body { background: #f0f0f0; overflow: hidden; font: 12px/16px "Noto Sans CJK SC", "Liberation Sans", sans-serif; color: #1d1d1d; }
.defs { position: absolute; }
.app { position: relative; width: 1365px; height: 681px; display: flex; flex-direction: column; overflow: hidden; }
.i { width: 16px; height: 16px; flex: none; display: block; }
.i18 { width: 18px; }
.i10 { width: 10px; height: 10px; }
.m { font: 10px/16px "Liberation Mono", monospace; }

/* menu */
.menubar { height: 30px; flex: none; display: flex; align-items: center; padding: 0 0 5px 7px; gap: 10.6px; }
.mi { white-space: nowrap; display: flex; align-items: center; }
.mi-doc { margin-left: -2px; gap: 3px; }
.mi-xiao { gap: 3px; margin-left: -6px; }
.notice { color: #3f7a1e; margin-left: 27px; white-space: nowrap; }
.mi-user { margin-left: 27px; gap: 4px; }
.phone { letter-spacing: .35px; }
.mi-bean { margin-left: -3px; }
.more { font: bold 13px/10px "Liberation Sans", sans-serif; color: #222; align-self: flex-start; margin-top: 3px; }
.more-top { margin-left: 24px; align-self: center; margin-top: -12px; }

.arr { flex: none; display: block; width: 6px; height: 3px; margin: 0 4px 0 2px; border: 3px solid transparent; border-top-color: #333; border-bottom: 0; }
.arr-n { margin: 0 6px 0 0; }
.arr-in { margin: 0 0 0 -2px; }
.arr-t { margin: 0 2px 0 0; }
.sep { flex: none; display: block; width: 1px; height: 20px; margin: 0 2.5px; background: #bdbdbd; }
.grip { flex: none; display: block; width: 3px; height: 18px; margin: 0 2px 0 3px; background: repeating-linear-gradient(180deg, #aaa 0 2px, transparent 2px 4px); }
.grip-mid { margin: 0 1px 0 6px; }
.grip-mid2 { margin: 0 2px 0 4px; }
.grip-end { margin-left: 3px; }

.it { display: flex; align-items: center; gap: 4px; height: 22px; padding: 0 4px 0 3px; white-space: nowrap; flex: none; }
.it.ic { padding: 0 3px; }
.off { color: #a6a6a6; }
.on { background: #d9e9f8; outline: 1px solid #2a86b8; outline-offset: -1px; }
.sigma { width: 16px; text-align: center; font: bold 13px/16px "DejaVu Serif", serif; }

/* top tool rows */
.tb-top { height: 30px; flex: none; display: flex; align-items: flex-start; }
.seg { display: flex; align-items: center; background: #f8f8f8; height: 27px; flex: none; }
.seg-a { width: 151px; padding-left: 3px; }
.seg-a .more { margin-left: 18px; margin-top: 3px; }
.seg-b { width: 552px; padding-left: 3px; }
.seg-b .more { margin-left: auto; margin-right: 5px; margin-top: 3px; }
.seg-c { width: 640px; padding-left: 2px; }

.work { flex: 1; min-height: 0; display: flex; }

/* nav */
.nav { width: 165px; flex: none; display: flex; flex-direction: column; }
.nav-title { height: 16px; flex: none; background: #0a5fe6; color: #fff; display: flex; justify-content: space-between; align-items: center; padding: 0 5px 0 0; font-size: 13px; }
.nav-pin { display: flex; gap: 9px; }
.nav-btn { height: 22px; flex: none; text-align: center; line-height: 22px; background: linear-gradient(#f2f2f2, #e9e9e9); border-bottom: 1px solid #8d8d8d; border-right: 1px solid #a8a8a8; }
.tree-tools { height: 28px; flex: none; display: flex; gap: 7px; align-items: center; padding: 2px 0 0 7px; background: linear-gradient(#f8f8f8, #f0f0f0); }
.tree { flex: 1; min-height: 0; overflow: hidden; margin-left: 2px; background: #fff; border: 1px solid #8d8d8d; padding-top: 1px; }
.row, .kid { height: 16px; display: flex; align-items: center; white-space: nowrap; }
.row { padding-left: 8px; background: repeating-linear-gradient(90deg, #888 0 1px, transparent 1px 2px) no-repeat 18px 8px / 5px 1px; }
.chev { flex: none; display: block; width: 6px; height: 6px; border: solid #bbb; border-width: 2px 2px 0 0; transform: rotate(45deg); }
.chev.op { border-color: #444; border-width: 0 2px 2px 0; transform: rotate(45deg) translate(-1px, -1px); }
.fd { width: 16px; height: 16px; flex: none; margin: 0 5px 0 9px; }
.kid { padding-left: 43px; gap: 5px; background:
  repeating-linear-gradient(90deg, #888 0 1px, transparent 1px 2px) no-repeat 31px 8px / 12px 1px,
  repeating-linear-gradient(180deg, #888 0 1px, transparent 1px 2px) no-repeat 31px 0 / 1px 16px,
  repeating-linear-gradient(180deg, #888 0 1px, transparent 1px 2px) no-repeat 12px 0 / 1px 16px; }
.kid.end { background-size: 12px 1px, 1px 8px, 1px 16px; }
.ki { width: 15px; height: 15px; flex: none; }
.kid.sel { background:
  linear-gradient(#d9d9d9, #d9d9d9) no-repeat 40px 0 / 58px 16px,
  repeating-linear-gradient(90deg, #888 0 1px, transparent 1px 2px) no-repeat 31px 8px / 12px 1px,
  repeating-linear-gradient(180deg, #888 0 1px, transparent 1px 2px) no-repeat 31px 0 / 1px 16px,
  repeating-linear-gradient(180deg, #888 0 1px, transparent 1px 2px) no-repeat 12px 0 / 1px 16px; }
.bk { width: 15px; height: 15px; flex: none; margin-left: -4px; }
.bk-cad { margin-left: 6px; }
.new { background: #ffe74c; font: bold 9px/8px "Liberation Sans", sans-serif; color: #5a5200; padding: 0 1px; height: 8px; align-self: flex-start; margin: 1px 0 0 -4px; }
.row .new { margin-left: 1px; }

/* main */
.main { flex: 1; min-width: 0; display: flex; flex-direction: column; margin-left: 5px; }
.tb { display: flex; align-items: center; flex: none; background: #f8f8f8; }
.t1 { height: 25px; width: 791px; margin-bottom: 2px; }
.t2 { height: 26px; width: 1063px; margin-bottom: 3px; }
.t3 { height: 28px; width: 1172px; }
.t3 > .sep { margin: 0 3px; }
.combo { display: flex; align-items: center; justify-content: space-between; width: 72px; height: 24px; padding-left: 2px; background: #fdfdfd; flex: none; }
.combo .arr { margin: 0 5px 0 0; }
.combo.c1 { width: 60px; padding-left: 3px; }
.blank { width: 44px; height: 24px; background: #fff; margin-left: 2px; flex: none; }
.more-t3 { margin-left: auto; margin-right: 9px; margin-top: 4px; }
.canvas { display: block; width: 1195px; height: 220px; flex: none; background: #000; }
.gridline path { fill: none; stroke: #b81424; stroke-width: 1; }
.gridline-b { stroke: #d01030; stroke-width: 1.500; fill: none; }
.dash { stroke: #4a3a6a; stroke-width: 1; stroke-dasharray: 10 14; }
.dash2 { stroke: #003000; stroke-width: 1; }
.orb circle { fill: none; stroke: #cfd8cf; stroke-width: 1; opacity: .85; }
.bubble circle { fill: none; stroke: #1f8a3a; stroke-width: 1; }
.bt7, .bt8 { font: 15px "Liberation Sans", sans-serif; }
.bt7 { fill: #b89aa0; }
.bt8 { fill: #f0f0f0; }
.ax { font: 12px "Liberation Sans", sans-serif; }
.ax-y { fill: #30d040; }
.ax-z { fill: #2a78e0; }
.ax-x { fill: #e02020; }

.snap { height: 29px; flex: none; padding: 2px 0 0 5px; }
.snap-in { display: flex; align-items: center; height: 24px; width: 472px; background: #f8f8f8; padding-left: 3px; }
.snap .on { height: 24px; }
.steel { flex: 1; min-height: 0; display: flex; margin-top: 3px; }
.steel-side { width: 13px; flex: none; display: flex; flex-direction: column; align-items: flex-start; padding-left: 1px; }
.dots { display: block; width: 7px; flex: 1; margin: 4px 0 0 1px; background: radial-gradient(circle, #c4c4c4 1px, transparent 1.2px) 0 0 / 4px 4px; }
.steel-body { flex: 1; min-width: 0; display: flex; flex-direction: column; }
.t4 { height: 24px; width: 1179px; margin-bottom: 3px; padding-left: 1px; }
.t4 .it.ic { padding: 0 3.500px; }
.t4 .sep { margin: 0 3px; }
.it-close { margin-left: 2px; }
.sheet { flex: 1; min-height: 0; display: grid; grid-template-columns: 32px 74px 57px 35px 33px 202px 166px 155px 61px 165px 39px 49px 60px 54px; grid-template-rows: 20px 18px; align-content: start; background: #fff; border-top: 1px solid #a8a8a8; border-left: 1px solid #a8a8a8; overflow: hidden; }
.th, .td { border-right: 1px solid #c4c4c4; border-bottom: 1px solid #b8b8b8; white-space: nowrap; overflow: hidden; }
.th { text-align: center; line-height: 18px; background: linear-gradient(#f6f6f6, #ececec); }
.th-on { background: linear-gradient(#fae0ae, #f4bd6a); color: #7a1030; }
.td-n { background: #fdd48c; text-align: center; line-height: 17px; color: #444; }
.td-cur { border-left: 2px solid #000; margin-left: -1px; }
.td-on { background: #d6e6f7; }
.hbar { height: 18px; flex: none; display: flex; align-items: center; background: #f0f0f0; padding-left: 7px; }
.sb-l, .sb-r { display: block; width: 6px; height: 6px; border: solid #666; border-width: 0 0 2px 2px; transform: rotate(45deg); flex: none; }
.sb-r { transform: rotate(-135deg); margin-left: 451px; }
.thumb { display: block; width: 698px; height: 16px; margin-left: 5px; background: #cdcdcd; flex: none; }

/* overlays */
.peek { position: absolute; left: 937px; top: 0; width: 238px; height: 6px; background: #fff; border: 1px solid #aaa; border-top: 0; }
.peek-o { position: absolute; left: 36px; top: 0; width: 20px; height: 4px; background: #e8501a; border-radius: 0 0 8px 8px; }
.peek-b1 { position: absolute; left: 130px; top: 0; width: 7px; height: 3px; background: #2a80d0; }
.peek-b2 { position: absolute; left: 205px; top: 0; width: 7px; height: 3px; background: #2a80d0; }
.start { position: absolute; left: 1312px; top: 61px; width: 51px; height: 22px; padding: 0; font: 12px "Noto Sans CJK SC", sans-serif; color: #222; background: #f2f2f2; border-style: solid; border-color: #aaa #555 #555 #aaa; border-width: 1px 2px 2px 1px; }
.widget { position: absolute; left: 1232px; top: 17px; width: 125px; height: 39px; border-radius: 20px; background: linear-gradient(#f2f4f2, #dfe2df); box-shadow: 0 1px 3px rgba(0,0,0,.35); display: flex; align-items: center; }
.gauge { width: 46px; height: 46px; flex: none; border-radius: 50%; border: 2px solid #cdd8d0; background: linear-gradient(#14784a 0, #2a9c60 22%, #2bb24f 23%, #24a848 100%); color: #fff; text-align: center; font: 15px/42px "Liberation Sans", sans-serif; letter-spacing: .5px; box-shadow: 0 1px 4px rgba(0,0,0,.4); }
.updn { display: flex; flex-direction: column; gap: 5px; margin-left: 3px; }
.rates { display: flex; flex-direction: column; font: 10px/15px "Liberation Sans", sans-serif; color: #333; margin-left: 19px; }
.plus { position: relative; width: 16px; height: 16px; margin-left: 7px; border-radius: 50%; background: #2a70d0; color: #fff; font: bold 14px/15px "Liberation Sans", sans-serif; text-align: center; flex: none; }
.plus::after { content: ""; position: absolute; right: -2px; top: -2px; width: 7px; height: 7px; border-radius: 50%; background: #e03040; }
```
